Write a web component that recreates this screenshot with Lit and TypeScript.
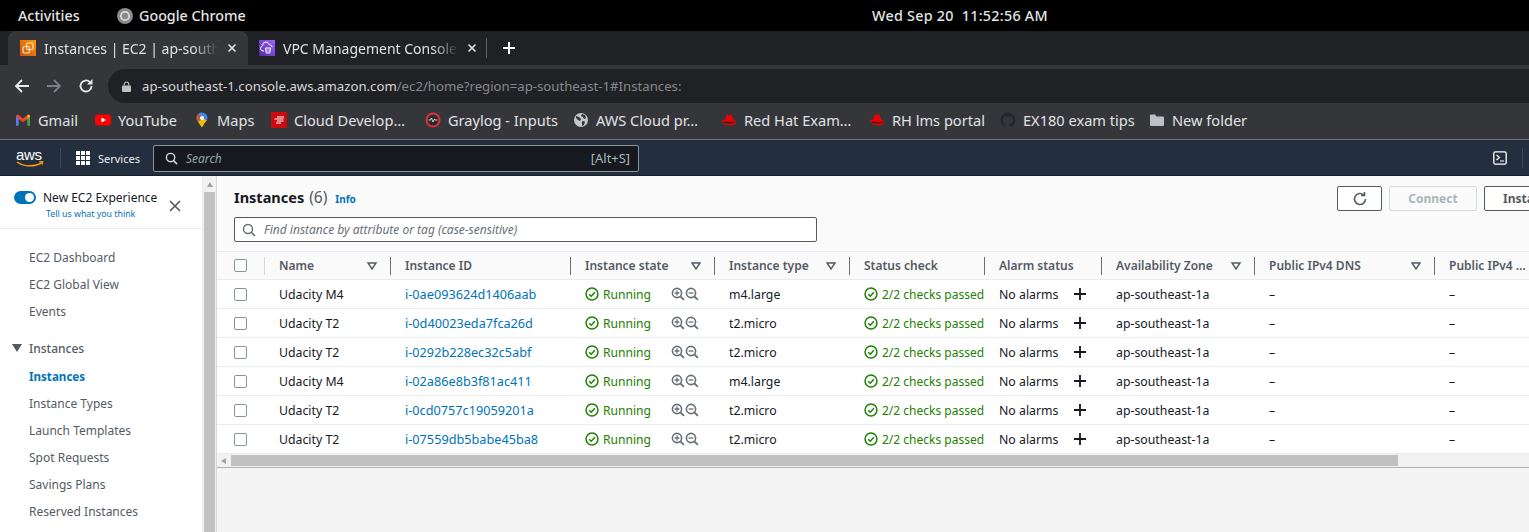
import { LitElement, html, css, svg } from "lit";
import { customElement } from "lit/decorators.js";

const rows = [
  ["Udacity M4", "i-0ae093624d1406aab", "m4.large"],
  ["Udacity T2", "i-0d40023eda7fca26d", "t2.micro"],
  ["Udacity T2", "i-0292b228ec32c5abf", "t2.micro"],
  ["Udacity M4", "i-02a86e8b3f81ac411", "m4.large"],
  ["Udacity T2", "i-0cd0757c19059201a", "t2.micro"],
  ["Udacity T2", "i-07559db5babe45ba8", "t2.micro"],
];

const check = html`<svg class="ok" viewBox="0 0 16 16" width="14" height="14"><circle cx="8" cy="8" r="6.8" fill="none" stroke="#1d8102" stroke-width="1.7"/><path d="M4.8 8.2l2.3 2.3 4.2-4.6" fill="none" stroke="#1d8102" stroke-width="1.7"/></svg>`;
const zoom = (plus: boolean) => html`<svg viewBox="0 0 14 14" width="14" height="14"><circle cx="6" cy="6" r="4.6" fill="none" stroke="#687078" stroke-width="1.6"/><path d="M9.5 9.5l3.4 3.4" stroke="#687078" stroke-width="1.8"/><path d="${plus ? "M3.6 6h4.8M6 3.6v4.8" : "M3.6 6h4.8"}" stroke="#687078" stroke-width="1.3"/></svg>`;
const filt = html`<svg class="filt" viewBox="0 0 10 8" width="10" height="8"><path d="M1 1h8L5 7z" fill="none" stroke="#545b64" stroke-width="1.4"/></svg>`;
const hat = html`<svg viewBox="0 0 16 16" width="16" height="16"><path d="M4 8.5l1.600-6 2.400.7 2.500-.7L12.500 8.500z" fill="#e00"/><path d="M1 8c1.500-.8 2.500-.7 3.500-.3 2.500 1 5 1.300 7.500.3 1.500-.3 3 .5 3 2.500 0 2-3 3-6.500 2.800C5 13 1 11 1 8z" fill="#e00"/><path d="M3 9.500c3 1.500 7 2 10.500.6" fill="none" stroke="#111" stroke-width="1.100"/></svg>`;

const bookmarks = [
  [html`<svg viewBox="0 0 16 16" width="16" height="16"><path d="M1 3.500v10h2.500V7L8 10.300 12.500 7v6.500H15v-10L13 2.500 8 6.500 3 2.500z" fill="#ea4335"/><path d="M1 4v9.500h2.500V7z" fill="#4285f4"/><path d="M15 4v9.500h-2.500V7z" fill="#34a853"/><path d="M12.500 7l2.500-2.500V3.500l-2-1-.5.400z" fill="#fbbc04"/></svg>`, "Gmail", 80],
  [html`<svg viewBox="0 0 16 16" width="16" height="16"><rect y="2.500" width="16" height="11" rx="3" fill="#f00"/><path d="M6.500 5.500v5L11 8z" fill="#fff"/></svg>`, "YouTube", 99],
  [html`<svg viewBox="0 0 16 16" width="16" height="16"><path d="M8 .5A5.500 5.500 0 0 0 2.500 6c0 1.600.7 2.700 1.500 3.700L8 15.500z" fill="#34a853"/><path d="M8 15.500l2.500-4.200 2.500-3.300L9.800 6.500 4 9.700z" fill="#fbbc04"/><path d="M8 .5A5.500 5.500 0 0 1 13.500 6c0 .8-.2 1.400-.5 2L9.800 6.500 6 3.500 4.200 2.100A5.500 5.500 0 0 1 8 .5z" fill="#4285f4"/><path d="M4.200 2.100L6.500 4.500 4 9.700C3.200 8.700 2.500 7.600 2.500 6c0-1.500.7-3 1.700-3.900z" fill="#ea4335"/><circle cx="8" cy="6" r="2" fill="#fff"/></svg>`, "Maps", 77],
  [html`<svg viewBox="0 0 16 16" width="16" height="16"><rect width="16" height="16" fill="#cc0a12"/><path d="M6 5h7M3.500 7h9M6 9h6.500M5 11h5" stroke="#fff" stroke-width="1.100"/></svg>`, "Cloud Develop…", 154],
  [html`<svg viewBox="0 0 16 16" width="16" height="16"><circle cx="8" cy="8" r="6.500" fill="#2c2c2c" stroke="#e0303c" stroke-width="2"/><path d="M3.500 8h2l1-2 1.500 4 1.500-3 .6 1h2.400" fill="none" stroke="#ddd" stroke-width=".9"/></svg>`, "Graylog - Inputs", 148],
  [html`<svg viewBox="0 0 16 16" width="16" height="16"><circle cx="8" cy="8" r="7" fill="#c4c7c5"/><path d="M3 4l3 1 2 2-1 2-2-1-2-2zM9 2l3 1 1 3-2 1-1-2-2-1zM9 9l3 .5-1 3.500-2 1z" fill="#35363a"/></svg>`, "AWS Cloud pr…", 148],
  [hat, "Red Hat Exam…", 148],
  [hat, "RH lms portal", 131],
  [html`<svg viewBox="0 0 16 16" width="16" height="16"><path fill="#24282c" d="M8 .5a7.700 7.700 0 0 0-2.400 15c.4.100.5-.2.500-.4v-1.400c-2.100.5-2.600-1-2.600-1-.3-.9-.8-1.100-.8-1.100-.7-.5 0-.5 0-.5.800.1 1.200.8 1.200.8.700 1.200 1.800.8 2.200.6.100-.5.300-.8.500-1-1.700-.2-3.500-.9-3.500-3.800 0-.8.300-1.500.8-2-.1-.2-.3-1 .1-2 0 0 .6-.2 2.100.8a7.300 7.300 0 0 1 3.800 0c1.500-1 2.100-.8 2.100-.8.400 1 .2 1.800.1 2 .5.500.8 1.200.8 2 0 2.900-1.800 3.600-3.500 3.800.3.200.5.700.5 1.400v2.100c0 .2.100.5.500.4A7.700 7.700 0 0 0 8 .5z"/></svg>`, "EX180 exam tips", 149],
  [html`<svg viewBox="0 0 16 16" width="16" height="16"><path d="M1 3.500A1 1 0 0 1 2 2.500h4l1.500 2H14a1 1 0 0 1 1 1V13a1 1 0 0 1-1 1H2a1 1 0 0 1-1-1z" fill="#bdc1c6"/></svg>`, "New folder", 100],
] as const;

const headers = [
  ["Name", true], ["Instance ID", false], ["Instance state", true], ["Instance type", true],
  ["Status check", false], ["Alarm status", false], ["Availability Zone", true], ["Public IPv4 DNS", true], ["Public IPv4 …", false],
] as const;

const navTop = ["EC2 Dashboard", "EC2 Global View", "Events"];
const navSub = ["Instance Types", "Launch Templates", "Spot Requests", "Savings Plans", "Reserved Instances"];

@customElement("app-root")
export class AppRoot extends LitElement {
  static styles = css`
    :host { display: block; width: 1529px; height: 532px; overflow: hidden; background: #fff; font-family: "Noto Sans", "Open Sans", sans-serif; }
    .sys { height: 31px; background: #000; color: #e4e4e4; display: flex; align-items: center; font-size: 14.3px; font-weight: 500; padding-left: 18px; }
    .sys-act { width: 99px; flex: none; }
    .sys-app { display: flex; align-items: center; gap: 6px; width: 755px; flex: none; }
    .sys-time { white-space: pre; letter-spacing: 0.28px; }

    .tabs { height: 34px; background: #202124; display: flex; align-items: flex-end; padding-left: 8px; color: #dfe1e5; font-size: 14px; }
    .tab { width: 240px; height: 34px; box-sizing: border-box; display: flex; align-items: center; padding: 0 11px 0 12px; gap: 8px; }
    .tab.on { background: #35363a; border-radius: 8px 8px 0 0; }
    .tab.off { padding-left: 11px; }
    .tab-title { flex: 1; overflow: hidden; white-space: nowrap; -webkit-mask-image: linear-gradient(90deg, #000 85%, transparent); mask-image: linear-gradient(90deg, #000 85%, transparent); }
    .sep { width: 1px; height: 20px; background: #5f6368; margin: 0 0 7px -2px; }
    .newtab { margin: 0 0 10px 15px; }

    .toolbar { height: 40px; box-sizing: border-box; padding: 2px 0 0 14px; background: #35363a; display: flex; align-items: center; }
    .navbtn { display: flex; gap: 16px; align-items: center; }
    .url { margin-left: 14px; flex: 1; height: 34px; background: #202124; border-radius: 17px 0 0 17px; display: flex; align-items: center; padding-left: 14px; gap: 11px; font-size: 13.2px; color: #d5d7da; white-space: nowrap; }
    .url span { color: #85898e; }

    .bm { height: 35px; padding: 0 0 5px 15px; background: #35363a; display: flex; align-items: center; color: #e0e2e6; font-size: 14.6px; white-space: nowrap; border-bottom: 1px solid #6f7174; box-sizing: border-box; }
    .bm-item { display: flex; align-items: center; gap: 7px; flex: none; }

    .aws { height: 36px; padding-top: 1px; background: #232f3e; display: flex; align-items: center; color: #eaeded; box-sizing: border-box; border-bottom: 1px solid #16202c; }
    .logo { width: 44px; margin-left: 16px; display: flex; flex-direction: column; }
    .logo-t { color: #fff; font-family: "Liberation Sans", sans-serif; font-size: 15px; letter-spacing: -0.3px; line-height: 13px; }
    .aws-sep { width: 1px; height: 20px; background: #414750; }
    .svc { display: flex; align-items: center; gap: 8px; font-size: 11px; margin-left: 15px; width: 77px; }
    .search { width: 486px; height: 27px; box-sizing: border-box; background: #16191f; border: 1px solid #879596; border-radius: 2px; display: flex; align-items: center; padding: 0 8px 0 11px; gap: 8px; color: #aab7b8; font-size: 12.900px; }
    .search i { flex: 1; color: #95a5a6; font-size: 12px; }
    .aws-right { margin-left: auto; display: flex; align-items: center; gap: 15px; }
    .aws-right .bar { width: 1px; height: 20px; background: #414750; margin-right: 6px; }

    .body { display: flex; height: 356px; overflow: hidden; }
    .side { width: 203px; flex: none; box-sizing: border-box; border-right: 1px solid #eaeded; font-size: 12px; color: #545b64; }
    .exp { height: 53px; padding: 15px 21px 0 14px; box-sizing: border-box; border-bottom: 1px solid #eaeded; display: flex; gap: 7px; }
    .switch { width: 22px; height: 13px; background: #0073bb; border-radius: 7px; position: relative; flex: none; }
    .switch::after { content: ""; position: absolute; right: 2px; top: 2px; width: 9px; height: 9px; border-radius: 50%; background: #fff; }
    .exp-txt { color: #16191f; font-size: 12px; line-height: 14px; white-space: nowrap; }
    .exp-txt div { color: #0073bb; font-size: 8.800px; line-height: 14px; margin: 2px 0 0 3px; }
    .exp-x { margin: 9px 0 0 auto; flex: none; }
    .side ul { list-style: none; margin: 0; padding: 0 0 0 29px; }
    .side ul.top { padding-top: 15px; }
    .side ul.sub { padding-top: 1px; }
    .side li { height: 27px; line-height: 27px; }
    .grp { display: flex; align-items: center; gap: 7px; margin: 9px 0 0 12px; height: 28px; font-weight: 500; }
    .side li.cur { color: #0073bb; font-weight: 700; font-size: 11.600px; }

    .vbar { width: 13px; flex: none; background: #f1f1f1; display: flex; flex-direction: column; align-items: center; }
    .vbar::before { content: ""; margin-top: 6px; border: 3.500px solid transparent; border-top: 0; border-bottom: 5px solid #a3a3a3; }
    .vthumb { width: 11px; flex: 1; background: #c1c1c1; margin-top: 5px; }

    .main { flex: 1; min-width: 0; background: #fafafa; overflow: hidden; border-left: 1px solid #d5dbdb; display: flex; flex-direction: column; }
    .head { height: 75px; flex: none; position: relative; box-sizing: border-box; padding: 10px 0 0 17px; }
    .title { display: flex; align-items: baseline; gap: 5px; font-size: 14.500px; line-height: 22px; color: #16191f; font-weight: 700; }
    .title span { font-weight: 400; color: #545b64; font-size: 15.500px; }
    .title a { color: #0073bb; font-size: 10px; font-weight: 700; margin-left: 3px; }
    .find { width: 583px; height: 25px; box-sizing: border-box; margin-top: 7px; background: #fff; border: 1px solid #545b64; border-radius: 2px; display: flex; align-items: center; padding-left: 7px; gap: 8px; font-size: 12px; font-style: italic; color: #687078; }
    .btns { position: absolute; top: 10px; left: 1120px; display: flex; gap: 7px; }
    .btn { height: 25px; box-sizing: border-box; border: 1px solid #545b64; border-radius: 2px; background: #fff; display: flex; align-items: center; justify-content: center; font-size: 12px; font-weight: 700; color: #545b64; }
    .btn.re { width: 45px; }
    .btn.dis { width: 88px; border-color: #d5dbdb; color: #aab7b8; background: #fafafa; }
    .btn.inst { width: 120px; justify-content: flex-start; padding-left: 18px; }

    .tw { overflow: hidden; flex: none; }
    .below { flex: 1; background: #f4f4f4; }
    .t { display: grid; grid-template-columns: 48px 126px 180px 144px 135px 135px 117px 153px 180px 180px; width: 1398px; font-size: 12.300px; color: #16191f; }
    .hc { height: 29px; box-sizing: border-box; background: #fafafa; border-top: 1px solid #eaeded; border-bottom: 1px solid #eaeded; display: flex; align-items: center; padding-left: 14px; font-size: 12px; font-weight: 600; color: #545b64; position: relative; white-space: nowrap; }
    .hc .filt { position: absolute; right: 14px; top: 10px; }
    .hc .div { position: absolute; right: 0; top: 5px; height: 18px; width: 1px; background: #687078; }
    .hc.c0 .div { background: #d5dbdb; }
    .cb { width: 13px; height: 13px; box-sizing: border-box; border: 1px solid #879596; border-radius: 2px; background: #fff; }
    .td { height: 29px; box-sizing: border-box; background: #fff; border-bottom: 1px solid #eaeded; display: flex; align-items: center; padding-left: 14px; white-space: nowrap; }
    .hc.c0, .td.c0 { padding-left: 17px; }
    .lnk { color: #0073bb; font-size: 12.700px; }
    .gr { color: #1d8102; display: flex; align-items: center; gap: 4px; font-size: 12px; }
    .run { font-size: 12.100px; }
    .zooms { display: flex; margin-left: 20px; }
    .plus { margin-left: 15px; }
    .hs { height: 13px; background: #f1f1f1; display: flex; align-items: center; border-bottom: 1px solid #aeb5b5; }
    .hs::before { content: ""; margin-left: 4px; border: 3.500px solid transparent; border-left: 0; border-right: 5px solid #a3a3a3; }
    .hthumb { width: 1167px; height: 11px; background: #c1c1c1; margin-left: 5px; }
  `;

  render() {
    return html`
      <div class="sys">
        <div class="sys-act">Activities</div>
        <div class="sys-app"><svg viewBox="0 0 16 16" width="16" height="16"><circle cx="8" cy="8" r="8" fill="#8a8a8a"/><circle cx="8" cy="8" r="4.200" fill="none" stroke="#ddd" stroke-width="1.700"/></svg>Google Chrome</div>
        <div class="sys-time">Wed Sep 20  11:52:56 AM</div>
      </div>

      <div class="tabs">
        <div class="tab on">
          <svg viewBox="0 0 16 16" width="16" height="16"><defs><linearGradient id="fo" x1="0" y1="1" x2="1" y2="0"><stop offset="0" stop-color="#c8511b"/><stop offset="1" stop-color="#ff9900"/></linearGradient></defs><rect width="16" height="16" fill="url(#fo)"/><rect x="6.500" y="3" width="6.500" height="6.500" rx="1.500" fill="none" stroke="#ffe3c4" stroke-width="1.200"/><rect x="3" y="6.500" width="6.500" height="6.500" rx="1.500" fill="none" stroke="#ffe3c4" stroke-width="1.200"/></svg>
          <div class="tab-title">Instances | EC2 | ap-southeast-1</div>
          <svg viewBox="0 0 10 10" width="10" height="10"><path d="M1.500 1.500l7 7M8.500 1.500l-7 7" stroke="#e8eaed" stroke-width="1.500"/></svg>
        </div>
        <div class="tab off">
          <svg viewBox="0 0 16 16" width="16" height="16"><defs><linearGradient id="fp" x1="0" y1="1" x2="1" y2="0"><stop offset="0" stop-color="#4d27a8"/><stop offset="1" stop-color="#a166ff"/></linearGradient></defs><rect width="16" height="16" fill="url(#fp)"/><path d="M5 11H4a2.600 2.600 0 0 1-.5-5.100A3.500 3.500 0 0 1 10.300 4.500c1.600 0 2.700 1.200 2.700 2.700" fill="none" stroke="#fff" stroke-width="1"/><path d="M6.500 8h5l-.7 5h-3.600z" fill="none" stroke="#fff" stroke-width="1"/><path d="M8 9v3M10 9v3" stroke="#fff" stroke-width=".7"/></svg>
          <div class="tab-title">VPC Management Console</div>
          <svg viewBox="0 0 10 10" width="10" height="10"><path d="M1.500 1.500l7 7M8.500 1.500l-7 7" stroke="#e8eaed" stroke-width="1.500"/></svg>
        </div>
        <div class="sep"></div>
        <svg class="newtab" viewBox="0 0 14 14" width="14" height="14"><path d="M7 1v12M1 7h12" stroke="#fff" stroke-width="2"/></svg>
      </div>

      <div class="toolbar">
        <div class="navbtn">
          <svg viewBox="0 0 16 16" width="16" height="16"><path d="M15 8H2M8 2L2 8l6 6" fill="none" stroke="#e8eaed" stroke-width="1.800"/></svg>
          <svg viewBox="0 0 16 16" width="16" height="16"><path d="M1 8h13M8 2l6 6-6 6" fill="none" stroke="#7b7e82" stroke-width="1.800"/></svg>
          <svg viewBox="0 0 16 16" width="16" height="16"><path d="M13.500 8a5.500 5.500 0 1 1-1.700-4" fill="none" stroke="#e8eaed" stroke-width="1.800"/><path d="M14.500 1v5.500H9z" fill="#e8eaed"/></svg>
        </div>
        <div class="url">
          <svg viewBox="0 0 10 12" width="9" height="11"><rect y="5" width="10" height="7" rx="1" fill="#bdc1c6"/><path d="M2.500 5V3.500a2.500 2.500 0 0 1 5 0V5" fill="none" stroke="#bdc1c6" stroke-width="1.200"/></svg>
          <div>ap-southeast-1.console.aws.amazon.com<span>/ec2/home?region=ap-southeast-1#Instances:</span></div>
        </div>
      </div>

      <div class="bm">
        ${bookmarks.map(([ic, t, w]) => html`<div class="bm-item" style="width:${w}px">${ic}<span>${t}</span></div>`)}
      </div>

      <div class="aws">
        <div class="logo">
          <span class="logo-t">aws</span>
          <svg viewBox="0 0 28 7" width="28" height="7"><path d="M1 1c7 5 18 5 25 .5" fill="none" stroke="#f90" stroke-width="1.500"/><path d="M23 .8l4-.5-1 3.500" fill="none" stroke="#f90" stroke-width="1"/></svg>
        </div>
        <div class="aws-sep"></div>
        <div class="svc">
          <svg viewBox="0 0 14 14" width="14" height="14" fill="#fff">
            ${[0, 5, 10].flatMap((x) => [0, 5, 10].map((y) => svg`<rect x="${x}" y="${y}" width="4" height="4"/>`))}
          </svg>
          Services
        </div>
        <div class="search">
          <svg viewBox="0 0 14 14" width="13" height="13"><circle cx="6" cy="6" r="4.500" fill="none" stroke="#d5dbdb" stroke-width="1.500"/><path d="M9.500 9.500l3.500 3.500" stroke="#d5dbdb" stroke-width="1.700"/></svg>
          <i>Search</i>
          <span>[Alt+S]</span>
        </div>
        <div class="aws-right">
          <svg viewBox="0 0 14 14" width="14" height="14"><rect x=".8" y=".8" width="12.400" height="12.400" rx="1.500" fill="none" stroke="#fff" stroke-width="1.300"/><path d="M3.500 4l3 2.500-3 2.500M7 10h4" fill="none" stroke="#fff" stroke-width="1.200"/></svg>
          <div class="bar"></div>
        </div>
      </div>

      <div class="body">
        <div class="side">
          <div class="exp">
            <div class="switch"></div>
            <div class="exp-txt">New EC2 Experience<div>Tell us what you think</div></div>
            <svg class="exp-x" viewBox="0 0 12 12" width="12" height="12"><path d="M1 1l10 10M11 1L1 11" stroke="#545b64" stroke-width="1.700"/></svg>
          </div>
          <ul class="top">${navTop.map((n) => html`<li>${n}</li>`)}</ul>
          <div class="grp"><svg viewBox="0 0 10 8" width="10" height="8"><path d="M0 0h10L5 8z" fill="#545b64"/></svg>Instances</div>
          <ul class="sub"><li class="cur">Instances</li>${navSub.map((n) => html`<li>${n}</li>`)}</ul>
        </div>
        <div class="vbar"><div class="vthumb"></div></div>
        <div class="main">
          <div class="head">
            <div class="title">Instances <span>(6)</span><a>Info</a></div>
            <div class="find">
              <svg viewBox="0 0 14 14" width="14" height="14"><circle cx="6" cy="6" r="4.500" fill="none" stroke="#687078" stroke-width="1.500"/><path d="M9.500 9.500l3.500 3.500" stroke="#687078" stroke-width="1.700"/></svg>
              Find instance by attribute or tag (case-sensitive)
            </div>
            <div class="btns">
              <div class="btn re"><svg viewBox="0 0 16 16" width="16" height="16"><path d="M13.500 8a5.500 5.500 0 1 1-1.700-4" fill="none" stroke="#545b64" stroke-width="1.600"/><path d="M12.500 1v3.500H9" fill="none" stroke="#545b64" stroke-width="1.600"/></svg></div>
              <div class="btn dis">Connect</div>
              <div class="btn inst">Instance state</div>
            </div>
          </div>
          <div class="tw">
            <div class="t">
              <div class="hc c0"><div class="cb"></div><div class="div"></div></div>
              ${headers.map(([h, f]) => html`<div class="hc">${h}${f ? filt : ""}<div class="div"></div></div>`)}
              ${rows.map((r) => html`
                <div class="td c0"><div class="cb"></div></div>
                <div class="td">${r[0]}</div>
                <div class="td lnk">${r[1]}</div>
                <div class="td"><div class="gr run">${check}Running</div><div class="zooms">${zoom(true)}${zoom(false)}</div></div>
                <div class="td">${r[2]}</div>
                <div class="td"><div class="gr">${check}2/2 checks passed</div></div>
                <div class="td">No alarms<svg class="plus" viewBox="0 0 14 14" width="14" height="14"><path d="M7 1v12M1 7h12" stroke="#16191f" stroke-width="1.800"/></svg></div>
                <div class="td">ap-southeast-1a</div>
                <div class="td">–</div>
                <div class="td">–</div>
              `)}
            </div>
            <div class="hs"><div class="hthumb"></div></div>
          </div>
          <div class="below"></div>
        </div>
      </div>
    `;
  }
}
